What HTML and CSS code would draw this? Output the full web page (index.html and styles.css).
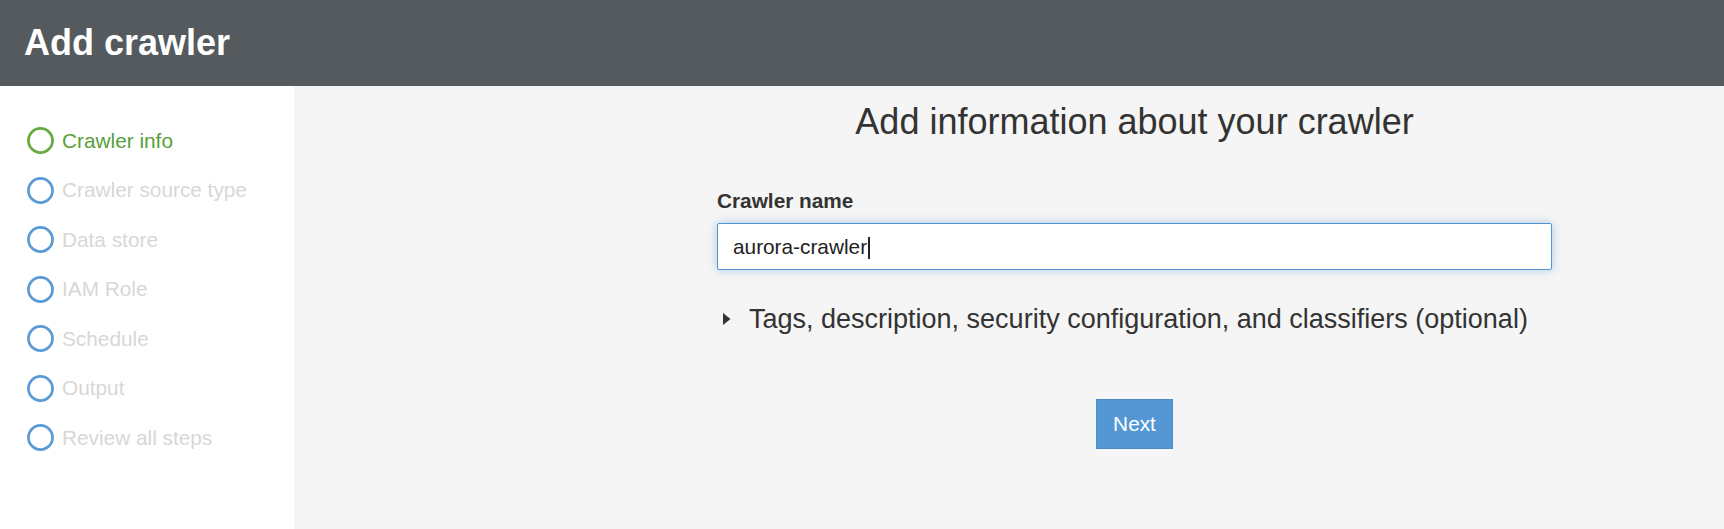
FILE: index.html
```html
<!DOCTYPE html>
<html lang="en">
<head>
<meta charset="utf-8">
<title>Add crawler</title>
<link rel="stylesheet" href="styles.css">
</head>
<body>
<header class="topbar">
  <h1 class="title">Add crawler</h1>
</header>
<div class="layout">
  <nav class="steps">
    <div class="step step-active"><svg class="ring" viewBox="0 0 26 26"><circle cx="13" cy="13" r="11.6" /></svg><span>Crawler info</span></div>
    <div class="step"><svg class="ring" viewBox="0 0 26 26"><circle cx="13" cy="13" r="11.6" /></svg><span>Crawler source type</span></div>
    <div class="step"><svg class="ring" viewBox="0 0 26 26"><circle cx="13" cy="13" r="11.6" /></svg><span>Data store</span></div>
    <div class="step"><svg class="ring" viewBox="0 0 26 26"><circle cx="13" cy="13" r="11.6" /></svg><span>IAM Role</span></div>
    <div class="step"><svg class="ring" viewBox="0 0 26 26"><circle cx="13" cy="13" r="11.6" /></svg><span>Schedule</span></div>
    <div class="step"><svg class="ring" viewBox="0 0 26 26"><circle cx="13" cy="13" r="11.6" /></svg><span>Output</span></div>
    <div class="step"><svg class="ring" viewBox="0 0 26 26"><circle cx="13" cy="13" r="11.6" /></svg><span>Review all steps</span></div>
  </nav>
  <main class="main">
    <section class="column">
      <h2 class="heading">Add information about your crawler</h2>
      <label class="label">Crawler name</label>
      <div class="input"><span class="value">aurora-crawler</span><span class="caret"></span></div>
      <div class="toggle">
        <svg class="tri" viewBox="0 0 8 12"><polygon points="0,0 7.5,6 0,12" /></svg>
        <span>Tags, description, security configuration, and classifiers (optional)</span>
      </div>
      <div class="actions">
        <button class="next">Next</button>
      </div>
    </section>
  </main>
</div>
</body>
</html>
```

FILE: styles.css
```css
* { box-sizing: border-box; }
html, body {
  margin: 0;
  padding: 0;
  height: 100%;
}
body {
  font-family: "Liberation Sans", Arial, sans-serif;
  font-size: 20.8px;
  color: #333;
  background: #f4f5f4;
  display: flex;
  flex-direction: column;
  overflow: hidden;
}
.topbar {
  height: 86px;
  background: #545a5e;
  padding: 0 24px;
  display: flex;
  align-items: center;
  flex-shrink: 0;
}
.title {
  margin: 0;
  color: #fff;
  font-size: 36px;
  font-weight: bold;
  line-height: 40px;
}
.layout {
  flex: 1;
  display: flex;
}
.steps {
  width: 294px;
  background: #fff;
  padding: 30px 0 0 27px;
  flex-shrink: 0;
}
.step {
  height: 49.5px;
  display: flex;
  align-items: center;
  gap: 8px;
  color: #d7d7d7;
  line-height: 24px;
}
.ring {
  width: 27px;
  height: 27px;
  flex-shrink: 0;
}
.ring circle {
  fill: none;
  stroke: #5b9bd5;
  stroke-width: 2.6;
}
.step-active { color: #58a03a; }
.step-active .ring circle { stroke: #69a941; }
.main {
  flex: 1;
  padding-left: 423px;
}
.column {
  width: 835px;
  display: flex;
  flex-direction: column;
}
.heading {
  margin: 16px 0 0;
  font-size: 36px;
  font-weight: normal;
  line-height: 40px;
  text-align: center;
  color: #333;
}
.label {
  margin-top: 47px;
  font-weight: bold;
  line-height: 24px;
  color: #333;
}
.input {
  margin-top: 10px;
  height: 47px;
  background: #fff;
  border: 1px solid #5294d4;
  border-radius: 2px;
  box-shadow: 0 0 8px rgba(82, 148, 212, 0.45);
  padding: 0 15px;
  display: flex;
  align-items: center;
  color: #222;
  line-height: 24px;
}
.caret {
  width: 2px;
  height: 22px;
  background: #222;
  margin-left: 1px;
  margin-top: 2px;
}
.toggle {
  margin-top: 33px;
  display: flex;
  align-items: center;
  font-size: 27px;
  line-height: 32px;
  color: #333;
  padding-left: 6px;
}
.tri {
  width: 8px;
  height: 12px;
  margin-right: 18px;
  flex-shrink: 0;
}
.tri polygon { fill: #333; }
.actions {
  margin-top: 64px;
  display: flex;
  justify-content: center;
}
.next {
  font-family: inherit;
  font-size: 20.8px;
  height: 50px;
  padding: 0 16px;
  min-width: 76px;
  background: #5597d4;
  border: 1px solid #4c8cc8;
  border-radius: 0;
  color: #fff;
}
```
